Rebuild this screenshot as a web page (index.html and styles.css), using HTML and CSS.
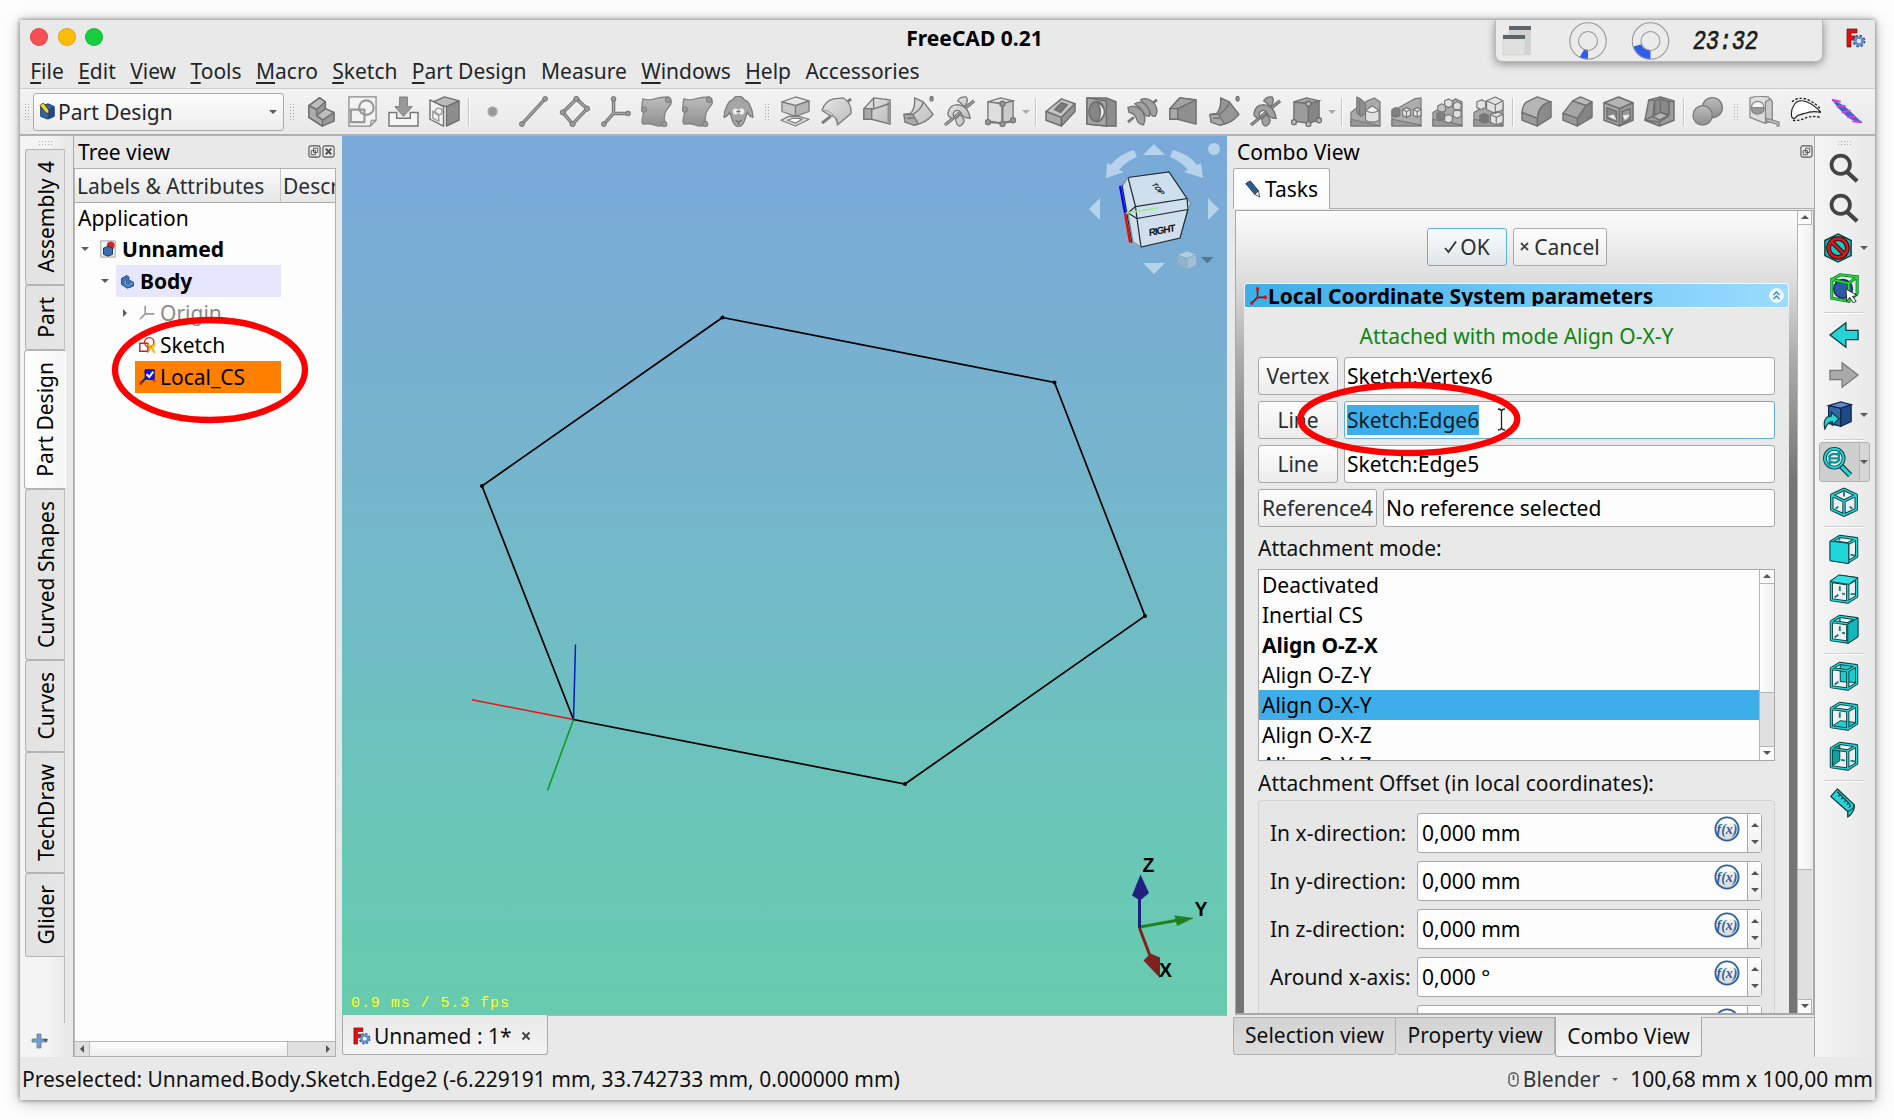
FILE: index.html
```html
<!DOCTYPE html>
<html lang="en">
<head>
<meta charset="utf-8">
<title>FreeCAD 0.21</title>
<link rel="stylesheet" href="styles.css">
</head>
<body>
<svg class="defs" width="0" height="0">
  <defs>
    <linearGradient id="g" x1="0" y1="0" x2="0" y2="1"><stop offset="0" stop-color="#bdbdbd"/><stop offset="1" stop-color="#8f8f8f"/></linearGradient>
    <linearGradient id="lg" x1="0" y1="0" x2="1" y2="1"><stop offset="0" stop-color="#e6e6e6"/><stop offset="1" stop-color="#bbb"/></linearGradient>
    <linearGradient id="fx" x1="0" y1="0" x2="0" y2="1"><stop offset="0" stop-color="#fff"/><stop offset="1" stop-color="#d5d8cf"/></linearGradient>
  </defs>
  <!-- Part Design toolbar -->
  <symbol id="i-body" viewBox="0 0 32 32"><g stroke="#6f6f6f" stroke-width="1.5" stroke-linejoin="round"><path fill="#999" d="M3 10 14 2l6 4v7l9 5v8L17 31 3 22z"/><path fill="#bdbdbd" d="M3 10 14 2l6 4-9 8zM11 20l9-7 9 4-12 8z"/><path fill="#ababab" d="M3 10l8 4v6l6 5v6L3 22z"/></g></symbol>
  <symbol id="i-sketch" viewBox="0 0 32 32"><path fill="#f3f3f3" stroke="#8a8a8a" stroke-width="1.3" d="M2 1h28v24l-6 6H2z"/><path fill="#ccc" stroke="#8a8a8a" d="M30 25l-6 6 1-6z"/><g fill="none" stroke="#999" stroke-width="2.2"><path d="M4 14h14v13H4z"/><circle cx="20" cy="12" r="7.5"/></g></symbol>
  <symbol id="i-map" viewBox="0 0 32 32"><path fill="#f5f5f5" stroke="#777" stroke-width="1.5" d="M1 17h8v6h14v-6h8v14H1z"/><path fill="#999" stroke="#7a7a7a" d="M12 1h8v10h5l-9 10-9-10h5z"/></symbol>
  <symbol id="i-valid" viewBox="0 0 32 32"><g stroke="#6d6d6d" stroke-width="1.4" stroke-linejoin="round"><path fill="#bbb" d="M2 7 16 1l15 4-13 6z"/><path fill="#8d8d8d" d="M18 11 31 5v20l-13 6z"/><path fill="#f2f2f2" d="M1 4l14 7v20L1 24z"/></g><path fill="none" stroke="#999" stroke-width="1.5" d="M4 16l6 3v7l-6-3z"/><circle cx="10" cy="16" r="3.5" fill="none" stroke="#999" stroke-width="1.5"/></symbol>
  <symbol id="i-point" viewBox="0 0 32 32"><circle cx="16" cy="16" r="4.6" fill="#999" stroke="#aaa" stroke-width="1.5"/></symbol>
  <symbol id="i-line" viewBox="0 0 32 32"><path d="M4 29 28 3" stroke="#777" stroke-width="3.6"/><path d="M4 29 28 3" stroke="#aaa" stroke-width="1.4"/><g fill="#999" stroke="#777"><circle cx="4" cy="29" r="2.5"/><circle cx="28" cy="3" r="2.5"/></g></symbol>
  <symbol id="i-plane" viewBox="0 0 32 32"><path d="M18 3 29 13 14 29 4 17z" fill="none" stroke="#777" stroke-width="3.6"/><path d="M18 3 29 13 14 29 4 17z" fill="none" stroke="#aaa" stroke-width="1.4"/><g fill="#999" stroke="#777"><circle cx="18" cy="3" r="2.7"/><circle cx="29" cy="13" r="2.7"/><circle cx="14" cy="29" r="2.7"/><circle cx="4" cy="17" r="2.7"/></g></symbol>
  <symbol id="i-lcs" viewBox="0 0 32 32"><path d="M14 3v15h15M14 18 4 29" fill="none" stroke="#777" stroke-width="3.6"/><path d="M14 3v15h15M14 18 4 29" fill="none" stroke="#aaa" stroke-width="1.3"/><g fill="#999" stroke="#777"><circle cx="14" cy="3" r="2.5"/><circle cx="29" cy="18" r="2.5"/><circle cx="4" cy="29" r="2.5"/></g></symbol>
  <symbol id="i-binder" viewBox="0 0 32 32"><path fill="url(#g)" stroke="#858585" stroke-width="1.4" d="M2 3q6 2 12 0t14-2q4 2 3 7-3 4-5 7t-2 8q1 4-1 7-4 2-9 0t-12-1q-2-3 0-8 1-5-1-9 0-5 1-9z"/><g fill="#999" stroke="#777"><circle cx="28" cy="4" r="2.8"/><circle cx="3" cy="14" r="2.8"/><circle cx="24" cy="29" r="2.8"/></g></symbol>
  <symbol id="i-clone" viewBox="0 0 32 32"><path fill="#a5a5a5" stroke="#7b7b7b" stroke-width="1.3" d="M10 4q2-4 6-4t6 4q4 1 6 6 3 6 3 12-4-1-6-5l-3 9q-2 5-6 6-4-1-6-6l-3-9q-2 4-6 5 0-6 3-12 2-5 6-6z"/><circle cx="13" cy="16" r="3" fill="#eee"/><circle cx="19" cy="16" r="3" fill="#eee"/><path fill="none" stroke="#666" stroke-width="1.3" d="M14 16h4M13 25l3 2 3-2M16 27v3"/></symbol>
  <symbol id="i-pad" viewBox="0 0 32 32"><g stroke="#7b7b7b" stroke-width="1.3" stroke-linejoin="round"><path fill="#ddd" d="M1 25l8-4h10l11 3-14 7z"/><path fill="#fff" d="M8 25l5-2h6l4 1-7 4z"/><path fill="#e5e5e5" d="M2 6l14-5 14 4-14 5z"/><path fill="#c9c9c9" d="M2 6l14 4v11L2 16z"/><path fill="#b5b5b5" d="M16 10l14-5v11l-14 5z"/></g></symbol>
  <symbol id="i-rev" viewBox="0 0 32 32"><path d="M1 28l9-7M25 8l6-5" stroke="#7b7b7b" stroke-width="3"/><path fill="url(#lg)" stroke="#7b7b7b" stroke-width="1.3" stroke-linejoin="round" d="M1 15Q4 5 13 3L23 2Q32 7 31 18L17 30Q18 21 9 20Z"/><path fill="none" stroke="#999" d="M1 15q12-2 16 15"/></symbol>
  <symbol id="i-loft" viewBox="0 0 32 32"><g stroke="#777" stroke-width="1.4" stroke-linejoin="round"><path fill="url(#lg)" d="M2 13 12 2l17 2v25L10 24H2z"/><path fill="none" d="M12 2v11M10 14 28 8"/><path fill="none" stroke-width="1" d="M27 6v21"/><path fill="#aaa" d="M2 13h8v11H2z"/></g></symbol>
  <symbol id="i-pipe" viewBox="0 0 32 32"><g stroke="#777" stroke-width="1.4" stroke-linejoin="round"><path fill="url(#lg)" d="M12 2l9 4 10 13q-7 9-19 11l-9-4-2-7 7-1q5-6 4-16z"/><path fill="#aaa" d="M1 19h9l6 10-5 1-9-3z"/><path fill="none" d="M21 6q-2 8-11 13M4 23h7"/><ellipse cx="29.500" cy="2.800" rx="1.500" ry="2.300" fill="#999"/></g></symbol>
  <symbol id="i-helix" viewBox="0 0 32 32"><path d="M1 30 31 5" stroke="#777" stroke-width="3.4"/><path d="M1 30 31 5" stroke="#bbb" stroke-width="1"/><g fill="url(#lg)" stroke="#777" stroke-width="1.3"><path d="M14 5q3-5 9-4 3 5-2 10l-4-4zM12 24q1 7 4 7 4-1 5-6l-4-6z"/><path d="M4 19Q5 9 14 9q11 1 13 14-8 0-9-5-3-5-7-2-3 2 0 7-6 0-7-4z"/></g></symbol>
  <symbol id="i-prim" viewBox="0 0 32 32"><g stroke="#777" stroke-width="1.4"><path fill="#e2e2e2" d="M3 6 16 2l13 3-10 3z"/><path fill="#dedede" d="M3 6l15 2v20L3 26z"/><path fill="#cbcbcb" d="M18 8l11-3v20l-11 3z"/><path fill="none" stroke-width="2" d="M18 8v20L3 27M18 28l11-2"/><g fill="#999"><circle cx="18" cy="8" r="2.600"/><circle cx="3" cy="27" r="2.600"/><circle cx="18" cy="29" r="2.600"/><circle cx="29" cy="25" r="2.600"/></g></g></symbol>
  <symbol id="i-pocket" viewBox="0 0 32 32"><g stroke="#6f6f6f" stroke-width="1.5" stroke-linejoin="round"><path fill="#c4c4c4" d="M1 16 17 3l14 5-14 14z"/><path fill="#aaa" d="M1 16l16 6v9L1 25z"/><path fill="#949494" d="M17 22 31 8v8L17 31z"/><path fill="#7b7b7b" d="M10 14l7-7 6 2-7 8z"/></g></symbol>
  <symbol id="i-hole" viewBox="0 0 32 32"><g stroke="#6b6b6b" stroke-width="1.4"><path fill="#8d8d8d" d="M1 2h20l10 4v25h-9L1 29z"/><path fill="#a5a5a5" d="M1 2l20 3v26L1 29z"/><ellipse cx="11" cy="16" rx="8" ry="10.500" fill="#858585"/><path fill="#eee" d="M12 7q7 3 7 10-1 7-7 9 3-4 3-9t-3-10z"/></g></symbol>
  <symbol id="i-groove" viewBox="0 0 32 32"><path d="M1 27l6-5M24 9l7-5" stroke="#777" stroke-width="2.800"/><g fill="#a0a0a0" stroke="#6f6f6f" stroke-width="1.300" stroke-linejoin="round"><path d="M14 4q8-4 15 5 4 7 0 12-5 0-6-6-3-6-9-11z"/><path d="M8 8q7-4 12 2 5 6 3 11-4 0-6-4-4-6-9-9z"/><path d="M1 12q7-4 13 2 7 7 3 16-6-1-7-6-2-6-8-7z"/></g></symbol>
  <symbol id="i-sloft" viewBox="0 0 32 32"><g stroke="#6f6f6f" stroke-width="1.400" stroke-linejoin="round"><path fill="#8f8f8f" d="M2 13 12 2l17 2v25L10 24H2z"/><path fill="#a2a2a2" d="M2 13 12 2l17 2-19 9z"/><path fill="#aaa" d="M2 13h8v11H2z"/></g></symbol>
  <symbol id="i-spipe" viewBox="0 0 32 32"><g stroke="#6f6f6f" stroke-width="1.400" stroke-linejoin="round"><path fill="#969696" d="M12 2l9 4 10 13q-7 9-19 11l-9-4-2-7 7-1q5-6 4-16z"/><path fill="#a8a8a8" d="M1 19h9l6 10-5 1-9-3z"/><path fill="none" d="M21 6q-2 8-11 13M4 23h7"/><ellipse cx="29.500" cy="2.800" rx="1.500" ry="2.300" fill="#999"/></g></symbol>
  <symbol id="i-shelix" viewBox="0 0 32 32"><path d="M1 30 31 5" stroke="#6f6f6f" stroke-width="3.400"/><path d="M1 30 31 5" stroke="#aaa" stroke-width="1"/><g fill="#a0a0a0" stroke="#6f6f6f" stroke-width="1.300"><path d="M14 5q3-5 9-4 3 5-2 10l-4-4zM12 24q1 7 4 7 4-1 5-6l-4-6z"/><path d="M4 19Q5 9 14 9q11 1 13 14-8 0-9-5-3-5-7-2-3 2 0 7-6 0-7-4z"/></g></symbol>
  <symbol id="i-sprim" viewBox="0 0 32 32"><g stroke="#6f6f6f" stroke-width="1.400"><path fill="#aaa" d="M3 6 16 2l13 3-10 3z"/><path fill="#9c9c9c" d="M3 6l15 2v20L3 26z"/><path fill="#858585" d="M18 8l11-3v20l-11 3z"/><g fill="#bbb"><circle cx="18" cy="8" r="2.600"/><circle cx="3" cy="27" r="2.600"/><circle cx="18" cy="29" r="2.600"/><circle cx="29" cy="25" r="2.600"/></g></g></symbol>
  <symbol id="i-mirror" viewBox="0 0 32 32"><g stroke="#777" stroke-width="1.200" stroke-linejoin="round"><path fill="#aaa" d="M1 31V17L7 12 18 5l7-3 6 4v25z"/><path fill="#999" d="M1 24l30 7H1z"/><path fill="#8f8f8f" d="M7 1v16l4 4 5-3V9q-3-6-9-8z"/><path fill="none" d="M10 4v16"/><path fill="#e2e2e2" d="M16 15h14v10q-7 4-14 0z"/><path fill="#f2f2f2" d="M16 15l7-5 7 5q-7 4-14 0z"/></g></symbol>
  <symbol id="i-linear" viewBox="0 0 32 32"><g stroke="#777" stroke-width="1.200" stroke-linejoin="round"><path fill="#adadad" d="M1 31V16L24 3l7-1v29z"/><path fill="#9a9a9a" d="M1 24l30 6v1H1z"/><path fill="#808080" d="M1 14l4-2 4 2v6l-4 2-4-2z"/><path fill="#e6e6e6" d="M12 14l4-2 4 2v6l-4 2-4-2zM23 14l4-2 4 2v6l-4 2-4-2z"/><path fill="none" d="M12 14l4 2 4-2M16 16v6M23 14l4 2 4-2M27 16v6"/></g></symbol>
  <symbol id="i-polar" viewBox="0 0 32 32"><g stroke="#777" stroke-width="1.200" stroke-linejoin="round"><path fill="#a8a8a8" d="M1 31V17L24 3l7 3v25z"/><path fill="#9a9a9a" d="M1 24l30 6v1H1z"/><path fill="#e0e0e0" d="M13 5l4-2 4 2v5l-4 2-4-2zM22 8l4-2 4 2v5l-4 2-4-2zM22 16l4-2 4 2v5l-4 2-4-2zM13 21l4-2 4 2v5l-4 2-4-2z"/><path fill="#c4c4c4" d="M6 10l4-2 4 2v5l-4 2-4-2z"/><path fill="#808080" d="M5 18l4-2 4 2v5l-4 2-4-2z"/></g></symbol>
  <symbol id="i-multi" viewBox="0 0 32 32"><g stroke="#777" stroke-width="1.200" stroke-linejoin="round"><path fill="#a8a8a8" d="M1 31V17L24 3l7 5v23z"/><path fill="#9a9a9a" d="M1 24l30 6v1H1z"/><path fill="#e2e2e2" d="M4 6l5-2 4 2v6l-5 2-4-2zM14 5l9-4 8 4v9l-8 4-9-4zM18 19l7-3 6 3v8l-7 3-6-3z"/><path fill="#777" d="M7 20l5-2 4 2v6l-4 2-5-2z"/><path fill="none" d="M14 5l9 4 8-4M23 9v9M18 19l6 3 7-3M24 22v8"/></g></symbol>
  <symbol id="i-fillet" viewBox="0 0 32 32"><g stroke="#6f6f6f" stroke-width="1.400" stroke-linejoin="round"><path fill="#b5b5b5" d="M1 17Q2 7 8 5L17 1l14 5q-13 2-14 17z"/><path fill="#9a9a9a" d="M1 17l16 6v8L1 25z"/><path fill="#8b8b8b" d="M17 31v-8Q18 9 31 6v16z"/></g></symbol>
  <symbol id="i-chamfer" viewBox="0 0 32 32"><g stroke="#6f6f6f" stroke-width="1.400" stroke-linejoin="round"><path fill="#bbb" d="M11 5l8-4 12 5-6 4z"/><path fill="#a5a5a5" d="M1 18 11 5l14 5-9 13z"/><path fill="#999" d="M1 18l15 5v8L1 25z"/><path fill="#858585" d="M16 31v-8l9-13 6-4v16z"/></g></symbol>
  <symbol id="i-draft" viewBox="0 0 32 32"><g stroke="#6f6f6f" stroke-width="1.500" stroke-linejoin="round"><path fill="#b5b5b5" d="M1 7 16 1l15 6-14 6z"/><path fill="#aaa" d="M1 7l16 6v18L1 25z"/><path fill="#999" d="M17 13l14-6v18l-14 6z"/><path fill="#888" d="M4 12l10 4v11L4 23z"/><path fill="#999" d="M20 16l8-3v11l-8 4z"/><path fill="#eee" stroke="none" d="M5 21l9 4-3-6zM20 20l8-1-5 6z"/></g></symbol>
  <symbol id="i-thick" viewBox="0 0 32 32"><g stroke="#6f6f6f" stroke-width="1.500" stroke-linejoin="round"><path fill="#9c9c9c" d="M1 25 5 4l12-3 14 4v20l-15 6z"/><path fill="#8a8a8a" d="M11 5l6-2 9 3v13l-9-2-6 3z"/><path fill="#b5b5b5" d="M9 21l8-4 8 3-9 5z"/><path fill="none" d="M17 3v14M5 4l6 1-2 16-8 4 15 2 10-7V6l5-1M16 27v4"/></g></symbol>
  <symbol id="i-bool" viewBox="0 0 32 32"><g fill="url(#g)" stroke="#7b7b7b" stroke-width="1.400"><circle cx="21" cy="12" r="10.300"/><circle cx="11" cy="20" r="10"/></g></symbol>
  <symbol id="i-tape" viewBox="0 0 32 32"><g stroke="#888" stroke-width="1.300" stroke-linejoin="round"><path fill="#dedede" d="M1 2l8-2 11 1 4 5v20l-8 2-15-6z"/><path fill="#c9c9c9" d="M17 6l5-3 2 3v20l-7 2z"/><circle cx="9" cy="12" r="6.500" fill="#f4f4f4"/><path fill="#999" d="M2.500 12h13q0 6-6.500 6.500t-6.500-6.500z"/><path fill="#ccc" d="M18 23l13 4v4h-2v-2l-11-3z"/></g></symbol>
  <symbol id="i-airfoil" viewBox="0 0 32 32"><path fill="#fff" stroke="#222" stroke-width="1.200" d="M2 22Q0 15 5 8q4-5 12-2 8 3 15 11-9-2-17 1-8 2-9 4-2 2-4 0z"/><g fill="none" stroke="#222" stroke-width="1.400" stroke-dasharray="2.500 1.800"><path d="M2 6q7-6 17-2 8 4 12 9M3 25q6 1 12-2 7-3 17-1"/></g></symbol>
  <symbol id="i-glider" viewBox="0 0 32 32"><path fill="#3f66c4" d="M1 4q10 3 17 10t14 13q-9 0-16-6Q7 13 1 4z"/><path stroke="#d63be8" stroke-width="2.200" d="M1 4l9 2M6 11l9-1M11 17l9-2M17 22l8-1M22 26l10 1"/></symbol>
  <!-- Application glyphs -->
  <symbol id="i-fc" viewBox="0 0 20 20"><path fill="#d11" stroke="#611" stroke-width=".7" d="M1 1h10v4H5v3h4v4H5v7H1z"/><circle cx="13" cy="13" r="4.400" fill="none" stroke="#35588f" stroke-width="4" stroke-dasharray="2 1.450"/><circle cx="13" cy="13" r="3.700" fill="none" stroke="#5f8fd0" stroke-width="2.600"/></symbol>
  <symbol id="i-wb" viewBox="0 0 20 20"><path fill="#3465a4" stroke="#15305a" d="M3 5l8-3 7 3v11l-7 3-8-3z"/><path fill="#204a87" d="M11 8l7-3v11l-7 3z"/><path fill="#f4d328" stroke="#222" stroke-width=".8" d="M2 4l4-3 6 8v4l-3-1z"/></symbol>
  <symbol id="i-doc" viewBox="0 0 20 20"><path fill="#f4f4f4" stroke="#999" d="M2 1h16v18H2z"/><circle cx="13" cy="6" r="4.300" fill="#d22"/><path fill="#3b6db0" stroke="#143054" d="M5 9l5-2 5 2v7l-5 2-5-2z"/></symbol>
  <symbol id="i-bodyb" viewBox="0 0 20 20"><path fill="#3c72b4" stroke="#16355f" d="M2 6l7-4 3 2v4l6 3v5l-8 3-8-5z"/><path fill="none" stroke="#9fc4ee" d="M7 9v4l4 3 6-4"/></symbol>
  <symbol id="i-origin" viewBox="0 0 20 20"><path fill="none" stroke="#999" stroke-width="1.800" d="M8 2v9h10M8 11l-6 6"/></symbol>
  <symbol id="i-sk" viewBox="0 0 20 20"><path fill="none" stroke="#c22" stroke-width="1.600" d="M2 8h9v9H2z"/><circle cx="12.500" cy="7" r="5.200" fill="none" stroke="#c22" stroke-width="1.500"/><path fill="#fc0" stroke="#c80" stroke-width=".6" d="M10 9q5 0 4 5-1 4-4 5l3-5zM19 9q-5 0-4 5 1 4 4 5l-2-5z"/></symbol>
  <symbol id="i-lc" viewBox="0 0 20 20"><path stroke="#333" stroke-width="2.600" d="M2 18l8-8"/><g fill="#d22"><circle cx="3" cy="17" r="1.800"/><circle cx="8" cy="4" r="1.600"/><circle cx="18" cy="14" r="1.600"/></g><path fill="#0b16e8" stroke="#000080" d="M8 2h10v10l-2 1-8-1z"/><path fill="none" stroke="#fff" stroke-width="2.200" d="M9.500 7l3 3 4.500-6"/></symbol>
  <symbol id="i-lcsr" viewBox="0 0 20 20"><path fill="none" stroke="#333" stroke-width="1.800" d="M9 3v9h8M9 12l-6 6"/><g fill="#d11"><circle cx="9" cy="3" r="1.900"/><circle cx="17" cy="12" r="1.900"/><circle cx="3" cy="18" r="1.900"/><circle cx="9" cy="12" r="1.600"/></g></symbol>
  <symbol id="i-pencil" viewBox="0 0 20 20"><path fill="#2d5c94" stroke="#122c4e" d="M2 4l5-3 9 11-4 4z"/><path fill="#f0f0f0" stroke="#222" stroke-width=".8" d="M16 12l1.500 7-5.500-3z"/></symbol>
  <symbol id="i-float" viewBox="0 0 14 14"><rect x="1" y="1" width="12" height="12" rx="2" fill="none" stroke="#555" stroke-width="1.200"/><path fill="none" stroke="#555" d="M6 3.500h4.500V8H6zM3.500 6H8v4.500H3.500z"/></symbol>
  <symbol id="i-close" viewBox="0 0 14 14"><rect x="1" y="1" width="12" height="12" rx="2" fill="none" stroke="#555" stroke-width="1.200"/><path stroke="#444" stroke-width="2" d="M4 4l6 6M10 4l-6 6"/></symbol>
  <!-- View toolbar -->
  <symbol id="i-zoom" viewBox="0 0 32 32"><circle cx="12.500" cy="12.500" r="9.800" fill="none" stroke="#444" stroke-width="4"/><path d="M19 20l11 10" stroke="#444" stroke-width="4.500"/></symbol>
  <symbol id="i-nodraw" viewBox="0 0 32 32"><path fill="#17c6c8" stroke="#0b3a3c" stroke-width="1.500" d="M16 1l14 7v16l-14 7L2 24V8z"/><circle cx="16" cy="16" r="10" fill="none" stroke="#300" stroke-width="5"/><path d="M9 9l14 14" stroke="#300" stroke-width="5"/><circle cx="16" cy="16" r="10" fill="none" stroke="#d31919" stroke-width="3"/><path d="M9 9l14 14" stroke="#d31919" stroke-width="3"/></symbol>
  <symbol id="i-boxsel" viewBox="0 0 32 32"><circle cx="15" cy="17" r="10" fill="#2c5aa5" stroke="#132c55" stroke-width="1.500"/><g fill="none"><path stroke="#063" stroke-width="3.200" d="M3 7l18 4v19L3 27zM3 7l9-5 18 2-9 7M30 4v18l-9 8"/><path stroke="#2be52b" stroke-width="1.600" d="M3 7l18 4v19L3 27zM3 7l9-5 18 2-9 7M30 4v18l-9 8"/></g><path fill="#fff" stroke="#222" d="M18 17l12 7-5 1 4 5-3 2-4-6-3 4z"/></symbol>
  <symbol id="i-back" viewBox="0 0 32 32"><path fill="#25d4d6" stroke="#0b3a3c" stroke-width="1.400" d="M1 16 18 3v8h13v10H18v8z"/></symbol>
  <symbol id="i-fwd" viewBox="0 0 32 32"><path fill="#aaa" stroke="#777" stroke-width="1.400" d="M31 16 14 3v8H1v10h13v8z"/></symbol>
  <symbol id="i-link" viewBox="0 0 32 32"><g stroke="#12284a" stroke-width="1.400"><path fill="#5d8fcc" d="M6 6l13-4 11 3-11 4z"/><path fill="#3465a4" d="M6 6l13 3v19L6 25z"/><path fill="#204a87" d="M19 9l11-4v18l-11 5z"/></g><path fill="#25d4d6" stroke="#0b3a3c" stroke-width="1.300" d="M2 31q-3-13 7-14v-4l8 7-7 7v-4q-5 0-8 8z"/></symbol>
  <symbol id="i-fit" viewBox="0 0 32 32"><path d="M18 19l11 11" stroke="#0b3a3c" stroke-width="6"/><path d="M18 19l11 11" stroke="#25d4d6" stroke-width="3.500"/><circle cx="12" cy="12" r="10" fill="#e8f6f6" stroke="#0b3a3c" stroke-width="4"/><circle cx="12" cy="12" r="10" fill="none" stroke="#25d4d6" stroke-width="2.200"/><path fill="none" stroke="#0d9497" stroke-width="2.400" d="M6 11q3-5 9-3l2-2v6h-5M18 13q-3 5-9 3l-2 2v-6h5"/></symbol>
  <symbol id="i-iso" viewBox="0 0 32 32"><g fill="none" stroke-linejoin="round"><path stroke="#0b3a3c" stroke-width="3.600" d="M16 2.500l13 6V24l-13 6-13-6V8.500zM3 8.500l13 6.500 13-6.500M16 15v15"/><path stroke="#25d4d6" stroke-width="1.600" d="M16 2.500l13 6V24l-13 6-13-6V8.500zM3 8.500l13 6.500 13-6.500M16 15v15"/><path stroke="#0d7f82" stroke-width="2" d="M16 5v5M7 23l3-2M22 21l3 2"/></g></symbol>
  <symbol id="i-wire" viewBox="0 0 32 32"><g fill="none" stroke-linejoin="round"><path stroke="#0b3a3c" stroke-width="3.400" d="M2.500 8 20 10.500V30L2.500 27.500zM2.500 8l9-5.500L29.500 5l-9.500 5.500M29.500 5v19L20 30"/><path stroke="#25d4d6" stroke-width="1.500" d="M2.500 8 20 10.500V30L2.500 27.500zM2.500 8l9-5.500L29.500 5l-9.500 5.500M29.500 5v19L20 30"/></g></symbol>
  <symbol id="i-front" viewBox="0 0 32 32"><use href="#i-wire"/><path fill="#1ed6d8" stroke="#0b3a3c" d="M1 7.500l20 2.500v21.500L1 28.500z"/><path d="M11 3v4M23 22l5 1" stroke="#0d7f82" stroke-width="2"/></symbol>
  <symbol id="i-top" viewBox="0 0 32 32"><use href="#i-wire"/><path fill="#35e0e2" stroke="#0b3a3c" d="M1 8l9.500-7L31 4l-10 7z"/><path d="M11.500 13v5M6 25l4-3M14 21l3 .5M23 21.500h5" stroke="#0d7f82" stroke-width="2"/></symbol>
  <symbol id="i-right" viewBox="0 0 32 32"><use href="#i-wire"/><path fill="#12b9bc" stroke="#0b3a3c" d="M20 10.500 31 4v20l-11 7.500z"/><path d="M11.500 13v5M6 25l4-3M14 20l3 .5M11.500 4v4" stroke="#0d7f82" stroke-width="2"/></symbol>
  <symbol id="i-rear" viewBox="0 0 32 32"><path fill="#1bcfd1" stroke="#0b3a3c" d="M12 3l17 2v18l-17-1z"/><use href="#i-wire"/><path d="M6 25l4-3" stroke="#0d7f82" stroke-width="2"/></symbol>
  <symbol id="i-bottom" viewBox="0 0 32 32"><path fill="#1bcfd1" stroke="#0b3a3c" d="M3 27l9-6 17 2-9 7z"/><use href="#i-wire"/><path d="M11.500 12v6" stroke="#0d7f82" stroke-width="2"/></symbol>
  <symbol id="i-left" viewBox="0 0 32 32"><path fill="#0fa1a4" stroke="#0b3a3c" d="M3 8l8.500-5v18L3 27z"/><use href="#i-wire"/><path d="M13 20l4 1M23 21l5 1" stroke="#0d7f82" stroke-width="2"/></symbol>
  <symbol id="i-ruler" viewBox="0 0 32 32"><path fill="#25d4d6" stroke="#0b3a3c" stroke-width="1.300" stroke-linejoin="round" d="M2 9l7-8 18 17q1 7-7 13v-6z"/><path stroke="#0b3a3c" stroke-width="1.200" d="M20 25q6-2 7-7M9 4l3 3-2 2M12 7l3 3-2 2M15 10l3 3-2 2M18 13l3 3-2 2M21 16l2 3-2 2" fill="none"/></symbol>
  <symbol id="i-fx" viewBox="0 0 26 26"><circle cx="13" cy="13" r="11.600" fill="url(#fx)" stroke="#2f5f9e" stroke-width="1.800"/><text x="13" y="17.500" text-anchor="middle" class="fx-text">f(x)</text></symbol>
</svg>

<div class="window">
  <header class="titlebar">
    <div class="lights"><i class="red"></i><i class="yellow"></i><i class="green"></i></div>
    <h1>FreeCAD 0.21</h1>
    <svg class="fc-icon" width="20" height="20"><use href="#i-fc"/></svg>
  </header>
  <div class="applet">
    <svg width="327" height="41" viewBox="1495 20 327 41">
      <path fill="#d2d2d2" d="M1508 26h22v29h-22z"/><path fill="#5c666a" d="M1508 26h22v4h-22z"/>
      <path fill="#e0e0de" stroke="#c4c4c4" stroke-width=".5" d="M1502 35h22v20h-22z"/><path fill="#5c666a" d="M1502 35h22v4h-22z"/>
      <path fill="#2f5df2" d="M1587 59.300v-9.300l-3.500-1-5 8.300q4 2 8.500 2z"/>
      <path fill="#2f5df2" d="M1649.500 59.300v-9q-8-1-9-6l-8.500 2.500q4 12 17.500 12.500z"/>
      <g fill="none" stroke="#999" stroke-width="1.100"><circle cx="1587" cy="41" r="18.200"/><circle cx="1587" cy="41" r="9.500"/><circle cx="1649.500" cy="41" r="18.200"/><circle cx="1649.500" cy="41" r="9.500"/></g>
      <text x="1692" y="48.500" class="clock" textLength="65" lengthAdjust="spacingAndGlyphs">23:32</text>
    </svg>
  </div>
  <nav class="menubar"><span><u>F</u>ile</span><span><u>E</u>dit</span><span><u>V</u>iew</span><span><u>T</u>ools</span><span><u>M</u>acro</span><span><u>S</u>ketch</span><span><u>P</u>art Design</span><span>Measure</span><span><u>W</u>indows</span><span><u>H</u>elp</span><span>Accessories</span></nav>
  <div class="toolbar">
    <b class="grip g0"></b>
    <div class="combo"><svg width="18" height="18"><use href="#i-wb"/></svg><span>Part Design</span><i class="caret"></i></div>
    <b class="grip g1"></b>
    <svg><use href="#i-body"/></svg><svg><use href="#i-sketch"/></svg><svg><use href="#i-map"/></svg><svg><use href="#i-valid"/></svg>
    <b class="sep"></b>
    <svg><use href="#i-point"/></svg><svg><use href="#i-line"/></svg><svg><use href="#i-plane"/></svg><svg><use href="#i-lcs"/></svg><svg><use href="#i-binder"/></svg><svg><use href="#i-binder"/></svg><svg><use href="#i-clone"/></svg>
    <b class="grip"></b>
    <svg><use href="#i-pad"/></svg><svg><use href="#i-rev"/></svg><svg><use href="#i-loft"/></svg><svg><use href="#i-pipe"/></svg><svg><use href="#i-helix"/></svg><svg><use href="#i-prim"/></svg><i class="caret faint"></i>
    <b class="sep"></b>
    <svg><use href="#i-pocket"/></svg><svg><use href="#i-hole"/></svg><svg><use href="#i-groove"/></svg><svg><use href="#i-sloft"/></svg><svg><use href="#i-spipe"/></svg><svg><use href="#i-shelix"/></svg><svg><use href="#i-sprim"/></svg><i class="caret faint"></i>
    <b class="sep"></b>
    <svg><use href="#i-mirror"/></svg><svg><use href="#i-linear"/></svg><svg><use href="#i-polar"/></svg><svg><use href="#i-multi"/></svg>
    <b class="sep"></b>
    <svg><use href="#i-fillet"/></svg><svg><use href="#i-chamfer"/></svg><svg><use href="#i-draft"/></svg><svg><use href="#i-thick"/></svg>
    <b class="sep"></b>
    <svg><use href="#i-bool"/></svg>
    <b class="grip"></b>
    <svg><use href="#i-tape"/></svg><svg><use href="#i-airfoil"/></svg><svg><use href="#i-glider"/></svg>
  </div>

  <main class="main">
    <aside class="benches">
      <b class="hgrip"></b>
      <div class="bench b1"><span>Assembly 4</span></div>
      <div class="bench b2"><span>Part</span></div>
      <div class="bench b3 active"><span>Part Design</span></div>
      <div class="bench b4"><span>Curved Shapes</span></div>
      <div class="bench b5"><span>Curves</span></div>
      <div class="bench b6"><span>TechDraw</span></div>
      <div class="bench b7"><span>Glider</span></div>
      <div class="bench-rest"></div>
      <svg class="plus" width="18" height="16" viewBox="0 0 18 16"><path fill="#729fcf" stroke="#6a7f97" stroke-width=".8" d="M6 1h4v5h6v3h-6v6H6V9H1V6h5z"/><path fill="#555" d="M12 6h5l-2.500 3z"/></svg>
    </aside>

    <section class="tree">
      <div class="dock-title"><span>Tree view</span><svg width="13" height="13"><use href="#i-float"/></svg><svg width="13" height="13"><use href="#i-close"/></svg></div>
      <div class="tree-box">
        <div class="tree-head"><span>Labels &amp; Attributes</span><span>Descr</span></div>
        <div class="row r0">Application</div>
        <div class="row r1"><i class="caret"></i><svg width="18" height="18"><use href="#i-doc"/></svg><strong>Unnamed</strong></div>
        <div class="row r2"><i class="caret"></i><p class="cell body-cell"><svg width="15" height="17"><use href="#i-bodyb"/></svg><strong>Body</strong></p></div>
        <div class="row r3"><i class="caret side"></i><p class="cell muted"><svg width="18" height="18"><use href="#i-origin"/></svg>Origin</p></div>
        <div class="row r4"><p class="cell"><svg width="18" height="18"><use href="#i-sk"/></svg>Sketch</p></div>
        <div class="row r5"><p class="cell picked"><svg width="18" height="18"><use href="#i-lc"/></svg>Local_CS</p></div>
        <div class="hscroll"><i class="tri left"></i><b></b><i class="tri right"></i></div>
      </div>
    </section>

    <section class="view">
      <svg class="scene" width="885" height="879" viewBox="342 136 885 879">
        <path d="M722.500 317.500 1054.500 382.500 1145 616 905 784 573.500 719.500 482 486z" fill="none" stroke="#000" stroke-width="1.700"/>
        <g fill="#000"><circle cx="722.500" cy="317.500" r="2"/><circle cx="1054.500" cy="382.500" r="2"/><circle cx="1145" cy="616" r="2"/><circle cx="905" cy="784" r="2"/><circle cx="482" cy="486" r="2"/></g>
        <path d="M472 699.800 573.500 719.500" stroke="#f01010" stroke-width="1.500"/>
        <path d="M547.500 790.500 573.500 719.500" stroke="#0a9a1c" stroke-width="1.500"/>
        <path d="M575.500 644.500 573.500 719.500" stroke="#1010d8" stroke-width="1.500"/>
        <!-- navigation cube -->
        <g fill="#dcebf5" fill-opacity=".62">
          <path d="M1154 144l11 11h-22zM1154 274l11-11h-22zM1089 209l11-11v22zM1219 209l-11-11v22z"/>
          <circle cx="1214" cy="149" r="6"/>
          <path d="M1134 150l3 7q-12 5-18 13l5 2-18 6 1-15 4 2q8-11 23-15zM1173 150l-3 7q12 5 18 13l-4 2 19 6-2-15-4 2q-8-11-24-15z"/>
        </g>
        <path fill="#cfdfee" d="M1128 177.500 1169 172 1188 201 1191 204 1187 209 1180 238 1141 247 1133 243 1123 186z"/>
        <g fill="none" stroke="#222a30" stroke-width="1.200"><path d="M1128 177.500 1169 172 1187 198.500 1135.500 206.500zM1137 218.500 1188 209.500 1180 238 1141 247zM1135.500 206.500 1137 218.500 1128 213zM1187 198.500 1188 209.500M1122 185l10 58"/><path stroke="#7a9097" d="M1188 199l3 4-3 6M1123 185l5-8M1128 213l5 29 8 5"/></g>
        <path d="M1120 186l5 27" stroke="#0000f5" stroke-width="2.200"/><path d="M1125 213.500l5 29" stroke="#fa0000" stroke-width="2.200"/><path d="M1126 213 1158 208" stroke="#97ec97" stroke-width="1.600"/>
        <text class="cube-text" transform="translate(1149,236) rotate(-10) skewX(-8)" textLength="27">RIGHT</text>
        <text class="cube-text small" transform="translate(1151,184) rotate(50) skewX(-25)">TOP</text>
        <g stroke="#85a9bb" stroke-width=".8"><path fill="#b2d0e3" d="M1177 255l10-4 9.500 3.500-9 4z"/><path fill="#8fb3c9" d="M1177 255l10 3.500v11l-10-4z"/><path fill="#9fc1d6" d="M1187 258.500l9.500-4v11l-9.500 4z"/></g>
        <path fill="#56788b" d="M1201 257h12.500l-6.200 6.500z"/>
        <!-- axis cross -->
        <g stroke-width="3"><path d="M1140 927 1176 920.500" stroke="#208020"/><path d="M1139.500 928V895" stroke="#202080"/><path d="M1139.500 928l11 29" stroke="#802020"/></g>
        <path fill="#208020" d="M1174.500 915.500 1194 918 1177 926z"/><path fill="#202080" d="M1140.500 874.500 1149 893 1140 900.500 1132 895.500z"/><path fill="#802020" d="M1150.500 953.500 1160 957.500V978L1143.500 960.500z"/>
        <g class="axis-text"><text x="1142.500" y="871.500">Z</text><text x="1194.500" y="915.500">Y</text><text x="1159" y="976.500">X</text></g>
        <text class="fps" x="351" y="1007" textLength="158">0.9 ms / 5.3 fps</text>
      </svg>
      <div class="mdi"><div class="mdi-tab"><svg width="18" height="18"><use href="#i-fc"/></svg><span>Unnamed : 1*</span><svg width="10" height="10" viewBox="0 0 10 10"><path d="M1.500 1.500l7 7M8.500 1.500l-7 7" stroke="#444" stroke-width="2"/></svg></div></div>
    </section>

    <section class="combo-dock">
      <div class="dock-title"><span>Combo View</span><svg width="13" height="13"><use href="#i-float"/></svg></div>
      <div class="tabs"><div class="tab"><svg width="18" height="18"><use href="#i-pencil"/></svg><span>Tasks</span></div></div>
      <div class="pane">
        <div class="task-area">
          <div class="dialog-buttons"><button class="ok"><svg width="13" height="14" viewBox="0 0 13 14"><path fill="none" stroke="#333" stroke-width="1.800" d="M1 8l3.500 4L12 1.500"/></svg>OK</button><button class="cancel"><svg width="9" height="9" viewBox="0 0 9 9"><path d="M1 1l7 7M8 1l-7 7" stroke="#444" stroke-width="1.800"/></svg>Cancel</button></div>
          <div class="group-head"><svg width="19" height="19"><use href="#i-lcsr"/></svg><strong>Local Coordinate System parameters</strong><svg class="fold" width="15" height="15" viewBox="0 0 15 15"><circle cx="7.500" cy="7.500" r="6.800" fill="#eef3f6" stroke="#fff"/><path fill="none" stroke="#2b93d4" stroke-width="1.400" d="M4.500 7l3-3 3 3M4.500 11l3-3 3 3"/></svg></div>
          <div class="group">
            <p class="status">Attached with mode Align O-X-Y</p>
            <div class="ref"><button>Vertex</button><div class="field">Sketch:Vertex6</div></div>
            <div class="ref"><button>Line</button><div class="field focus"><mark>Sketch:Edge6</mark></div></div>
            <div class="ref"><button>Line</button><div class="field">Sketch:Edge5</div></div>
            <div class="ref"><button class="wide">Reference4</button><div class="field">No reference selected</div></div>
            <p class="label mode-label">Attachment mode:</p>
            <div class="list">
              <ul><li>Deactivated</li><li>Inertial CS</li><li class="bold">Align O-Z-X</li><li>Align O-Z-Y</li><li class="sel">Align O-X-Y</li><li>Align O-X-Z</li><li>Align O-Y-Z</li></ul>
              <div class="vscroll"><i class="tri up"></i><b></b><s></s><i class="tri down"></i></div>
            </div>
            <p class="label offset-label">Attachment Offset (in local coordinates):</p>
            <div class="offset">
              <div class="spin-row"><span>In x-direction:</span><div class="spin">0,000 mm<svg><use href="#i-fx"/></svg><em><i class="tri up"></i><i class="tri down"></i></em></div></div>
              <div class="spin-row"><span>In y-direction:</span><div class="spin">0,000 mm<svg><use href="#i-fx"/></svg><em><i class="tri up"></i><i class="tri down"></i></em></div></div>
              <div class="spin-row"><span>In z-direction:</span><div class="spin">0,000 mm<svg><use href="#i-fx"/></svg><em><i class="tri up"></i><i class="tri down"></i></em></div></div>
              <div class="spin-row"><span>Around x-axis:</span><div class="spin">0,000 °<svg><use href="#i-fx"/></svg><em><i class="tri up"></i><i class="tri down"></i></em></div></div>
              <div class="spin-row"><span></span><div class="spin"><svg><use href="#i-fx"/></svg><em></em></div></div>
            </div>
          </div>
        </div>
        <div class="vscroll main-scroll"><i class="tri up"></i><b></b><s></s><i class="tri down"></i></div>
      </div>
      <div class="bottom-tabs"><div class="t1">Selection view</div><div class="t2">Property view</div><div class="t3">Combo View</div><div class="rest"></div></div>
    </section>

    <aside class="viewbar">
      <b class="hgrip"></b>
      <div class="vb"><svg><use href="#i-zoom"/></svg></div>
      <div class="vb"><svg><use href="#i-zoom"/></svg></div>
      <div class="vb drop"><svg><use href="#i-nodraw"/></svg><i class="caret"></i></div>
      <div class="vb"><svg><use href="#i-boxsel"/></svg></div>
      <hr>
      <div class="vb"><svg><use href="#i-back"/></svg></div>
      <div class="vb"><svg><use href="#i-fwd"/></svg></div>
      <div class="vb drop"><svg><use href="#i-link"/></svg><i class="caret"></i></div>
      <hr>
      <div class="vb drop pressed"><svg><use href="#i-fit"/></svg><i class="caret"></i></div>
      <div class="vb"><svg><use href="#i-iso"/></svg></div>
      <hr>
      <div class="vb"><svg><use href="#i-front"/></svg></div>
      <div class="vb"><svg><use href="#i-top"/></svg></div>
      <div class="vb"><svg><use href="#i-right"/></svg></div>
      <hr>
      <div class="vb"><svg><use href="#i-rear"/></svg></div>
      <div class="vb"><svg><use href="#i-bottom"/></svg></div>
      <div class="vb"><svg><use href="#i-left"/></svg></div>
      <hr>
      <div class="vb"><svg><use href="#i-ruler"/></svg></div>
    </aside>
  </main>

  <footer class="statusbar">
    <span>Preselected: Unnamed.Body.Sketch.Edge2 (-6.229191 mm, 33.742733 mm, 0.000000 mm)</span>
    <div class="nav-style"><svg width="11" height="15" viewBox="0 0 11 15"><rect x="1" y="1" width="9" height="13" rx="4" fill="none" stroke="#555" stroke-width="1.400"/><path d="M5.500 3v5" stroke="#555" stroke-width="1.600"/></svg>Blender<i class="caret small"></i></div>
    <span class="dims">100,68 mm x 100,00 mm</span>
  </footer>
</div>

<svg class="marks" width="1894" height="1120">
  <g fill="none" stroke="#fe0000" stroke-width="6.300"><ellipse cx="210" cy="370" rx="95" ry="50"/><ellipse cx="1408.800" cy="419" rx="108.500" ry="34"/></g>
  <path d="M1498 409q3 0 3.500 2 .5-2 3.500-2M1501.500 411v17M1498 430q3 0 3.500-2 .5 2 3.500 2" fill="none" stroke="#fff" stroke-width="3"/>
  <path d="M1498 409q3 0 3.500 2 .5-2 3.500-2M1501.500 411v17M1498 430q3 0 3.500-2 .5 2 3.500 2" fill="none" stroke="#222" stroke-width="1.300"/>
</svg>
</body>
</html>
```
FILE: styles.css
```css
* { box-sizing: border-box; }
html, body { margin: 0; height: 1120px; overflow: hidden; }
body { background: #fdfdfd; font-family: "Noto Sans", sans-serif; font-size: 21px; line-height: 28px; color: #101010; padding: 20px 19px 20px 20px; white-space: nowrap; }
p, ul, h1 { margin: 0; padding: 0; }
li { list-style: none; }
button { font: inherit; color: #2a2e32; padding: 0; }
.defs { position: absolute; }
.window { width: 1855px; height: 1080px; background: #e9e9e9; display: flex; flex-direction: column; position: relative; box-shadow: 0 0 5px rgba(0,0,0,.5), 0 2px 16px rgba(0,0,0,.22); }

/* Title bar and menus */
.titlebar { height: 33px; display: flex; align-items: center; padding-left: 10px; }
.lights { display: flex; gap: 9.5px; }
.lights i { width: 18px; height: 18px; border-radius: 50%; box-shadow: inset 0 0 0 1px rgba(0,0,0,.12); }
.red { background: #f84f57; }
.yellow { background: #fcbc09; }
.green { background: #17cf3e; }
.titlebar h1 { flex: 1; text-align: center; font-size: 21px; line-height: 28px; padding-top: 3px; color: #000; }
.fc-icon { margin-right: 9px; margin-top: 3px; }
.applet { position: absolute; left: 1475px; top: 0; width: 328px; height: 42px; background: #ebebeb; border-radius: 0 0 7px 7px; border: 1px solid #b9b9b9; border-top: 0; box-shadow: 0 2px 8px rgba(0,0,0,.4); clip-path: inset(0 -20px -20px -20px); }
.applet svg { display: block; }
.clock { font: italic 28px "Liberation Mono", monospace; fill: #1c1c1c; stroke: #1c1c1c; stroke-width: .7px; }

.menubar { height: 35px; display: flex; align-items: center; padding: 0 0 0 3px; color: #232629; }
.menubar span { padding: 0 7.200px; }
.menubar u { text-decoration-thickness: 2px; text-underline-offset: 3px; text-decoration-skip-ink: none; }

/* Main toolbar */
.toolbar { height: 48px; border-top: 1px solid #cdcdcd; border-bottom: 2px solid #b0b0b0; background: linear-gradient(#f3f3f3, #e9e9e9); display: flex; align-items: center; }
.toolbar > svg { width: 31px; height: 31px; margin: 0 5px; flex: none; }
.grip { width: 16px; height: 17px; flex: none; background: radial-gradient(#aaa 28%, transparent 40%) 0 0 / 3px 3px content-box; background-clip: content-box; padding: 0 5px; }
.grip.g0 { width: 13px; padding: 0 4px; }
.grip.g1 { width: 17px; }
.combo { width: 251px; height: 38px; border: 1px solid #aaa; border-radius: 3px; background: linear-gradient(#fdfdfd, #ededed); display: flex; align-items: center; padding: 0 6px 0 4px; }
.combo span { flex: 1; padding-left: 2px; color: #232629; }
.combo svg { margin-top: -2px; }
.sep { width: 7.3px; height: 28px; flex: none; background: linear-gradient(90deg, transparent 3px, #c4c4c4 3px 4px, #fff 4px 5px, transparent 5px); }
.caret { width: 0; height: 0; border: 4px solid transparent; border-top-color: #5c5c5c; border-bottom: 0; flex: none; }
.caret.faint { border-top-color: #aaa; margin: 0 2px 0 1px; }
.caret.side { border: 4px solid transparent; border-left: 4px solid #5c5c5c; border-right: 0; }

/* Workbench tabs */
.main { height: 921px; display: flex; }
.benches { width: 46px; display: flex; flex-direction: column; align-items: flex-end; background: linear-gradient(90deg, #f4f4f4 60%, #e9e9e9); }
.hgrip { width: 16px; height: 6px; background: radial-gradient(#aaa 28%, transparent 40%) 0 0 / 3px 3px; }
.benches .hgrip { margin: 4px 12px 3px 0; }
.bench { width: 40px; border: 1px solid #b4b4b4; border-right-color: #c0c0c0; border-radius: 3px 0 0 3px; background: linear-gradient(90deg, #e2e2e2, #e6e6e6); display: flex; align-items: center; justify-content: center; color: #000; margin-right: 1px; padding-left: 1px; }
.bench span { writing-mode: vertical-rl; transform: rotate(180deg); }
.bench.active { width: 42px; background: linear-gradient(90deg, #fff, #f6f6f6); border-right-color: transparent; margin-right: 0; padding: 0 1px 0 0; }
.b1 { height: 136px; } .b2 { height: 65px; } .b3 { height: 139px; } .b4 { height: 171px; } .b5 { height: 92px; } .b6 { height: 121px; } .b7 { height: 84px; }
.bench-rest { width: 1px; height: 66px; background: #bbb; margin-right: 1px; }
.plus { margin: 10px 17px 0 0; }

/* Tree dock */
.tree { width: 263px; margin-left: 7px; border-left: 1px solid #aaa; display: flex; flex-direction: column; color: #000; }
.dock-title { height: 32px; display: flex; align-items: center; padding: 0 1px 0 4px; color: #000; }
.dock-title span { flex: 1; }
.dock-title svg { margin-left: 1px; margin-top: -1px; }
.tree-box { flex: 1; border: 1px solid #b0b0b0; border-left-color: #bbb; background: #fdfdfd; display: flex; flex-direction: column; overflow: hidden; }
.tree-head { height: 34px; flex: none; display: flex; border-bottom: 1px solid #aaa; background: linear-gradient(#fbfbfb, #e6e6e6); line-height: 35px; color: #2a2e32; }
.tree-head span { width: 206px; padding-left: 2px; border-right: 1px solid #c4c4c4; flex: none; }
.tree-head span + span { border: 0; }
.row { height: 32px; display: flex; align-items: center; flex: none; }
.r0 { padding-left: 3px; height: 30px; }
.r1 { padding-left: 6px; }
.r1 svg { margin: 0 5px 0 10px; }
.r2 { padding-left: 26px; }
.r2 .cell { margin-left: 7px; width: 165px; padding-left: 4px; gap: 5px; background: #e6e6ff; }
.r3 { padding-left: 48px; }
.cell { height: 32px; display: flex; align-items: center; gap: 4px; }
.r3 .cell { margin-left: 11px; }
.r4, .r5 { padding-left: 60px; }
.r4 .cell, .r5 .cell { padding-left: 3px; }
.muted { color: #8b8b8b; }
.picked { background: #ff8000; width: 146px; }
.hscroll { margin-top: auto; height: 15px; border-top: 1px solid #b5b5b5; background: #e0e0e0; display: flex; align-items: center; }
.hscroll .tri { margin: 0 5px; }
.hscroll b { width: 199px; height: 14px; background: linear-gradient(#fdfdfd, #eee); border: 1px solid #bbb; border-width: 0 1px; margin-right: auto; }
.tri { width: 0; height: 0; border: 4px solid transparent; flex: none; }
.tri.left { border-right-color: #555; border-left: 0; }
.tri.right { border-left-color: #555; border-right: 0; }
.tri.up { border-bottom-color: #555; border-top: 0; }
.tri.down { border-top-color: #555; border-bottom: 0; }

/* 3D view */
.view { width: 885px; margin-left: 6px; display: flex; flex-direction: column; }
.scene { display: block; background: linear-gradient(#7aa9da, #79afd1 22%, #72bac8 52%, #6ac7b6 80%, #67cbaf); }
.axis-text { font: bold 19.5px "Liberation Sans", sans-serif; }
.cube-text { font: bold 10px "Liberation Sans", sans-serif; fill: #111; }
.cube-text.small { font-size: 7px; }
.fps { font: 15px "Liberation Mono", monospace; fill: #ffff14; }
.mdi { height: 42px; border-top: 1px solid #b5b5b5; }
.mdi-tab { width: 206px; height: 40px; margin-top: -1px; background: linear-gradient(#e9e9e9, #f4f4f4); border: 1px solid #aaa; border-top: 0; border-radius: 0 0 3px 3px; display: flex; align-items: center; padding: 2px 0 0 10px; }
.mdi-tab span { padding: 0 9px 0 3px; }

/* Combo dock */
.combo-dock { width: 581px; margin-left: 6px; display: flex; flex-direction: column; }
.tabs { height: 41px; border-bottom: 1px solid #b0b0b0; }
.tab { width: 97px; height: 41px; border: 1px solid #aaa; border-bottom: 0; border-radius: 3px 3px 0 0; background: linear-gradient(#fff, #fbfbfb); display: flex; align-items: center; padding-left: 10px; gap: 3px; color: #000; }
.pane { height: 805px; border: 1px solid #a8a8a8; margin: 1px 0 0 2px; border-bottom-width: 2px; display: flex; padding-right: 1px; }
.task-area { flex: 1; height: 802px; overflow: hidden; background: linear-gradient(#fcfcfc 0, #ddd 70px, #aaa 150px, #757575 270px); padding: 17px 8px 0; display: flex; flex-direction: column; }
.dialog-buttons { display: flex; gap: 6px; justify-content: center; padding-left: 1px; }
button { height: 38px; border: 1px solid #a9a9a9; border-radius: 3px; background: linear-gradient(#fdfdfd, #ececec); display: flex; align-items: center; justify-content: center; flex: none; }
.ok { width: 80px; border-color: #57b0e6; gap: 3px; background: linear-gradient(#fafcfd, #dfe6ea); }
.cancel { width: 94px; gap: 5px; }
.group-head { height: 25px; margin-top: 17px; background: linear-gradient(90deg, #3daee9, #9bdcff); border: 1px solid #f4f8fa; border-radius: 3px 3px 0 0; display: flex; align-items: center; padding: 0 3px 0 4px; overflow: hidden; flex: none; color: #000; }
.group-head strong { flex: 1; height: 21px; line-height: 23px; overflow: hidden; }
.group-head .fold { margin-right: 1px; }
.group { flex: none; height: 740px; background: #e9e9e9; padding: 0 14px; }
.status { text-align: center; color: #0c860c; height: 49px; line-height: 57px; }
.ref { display: flex; gap: 6px; height: 38px; margin-bottom: 6px; }
.ref button { width: 80px; }
.ref button.wide { width: 119px; }
.field { flex: 1; border: 1px solid #aaa; border-radius: 3px; background: #fdfdfd; line-height: 30px; padding: 1px 0 0 2px; color: #000; display: flex; align-items: center; }
.field.focus { border-color: #57b0e6; padding-top: 0; }
mark { background: #3daee9; color: #0b1a24; line-height: 30px; height: 30px; }
.mode-label { height: 36px; line-height: 30px; }
.list { height: 192px; border: 1px solid #a8a8a8; background: #fdfdfd; display: flex; }
.list ul { flex: 1; height: 190px; overflow: hidden; }
.list li { height: 30px; line-height: 31px; padding-left: 3px; color: #000; }
.list .bold { font-weight: bold; }
.list .sel { background: #3daee9; }
.vscroll { width: 15px; flex: none; border-left: 1px solid #b5b5b5; background: #fbfbfb; display: flex; flex-direction: column; align-items: center; }
.vscroll .tri { margin: 4px 0 5px; }
.vscroll b { width: 14px; height: 110px; border: 1px solid #b5b5b5; border-width: 1px 0; background: linear-gradient(90deg, #fdfdfd, #f0f0f0); }
.vscroll s { flex: 1; width: 14px; background: #e0e0e0; border-bottom: 1px solid #b5b5b5; }
.main-scroll b { height: 646px; }
.main-scroll { border-right: 1px solid #b5b5b5; }
.offset-label { height: 39px; line-height: 44px; }
.offset { border: 1px solid #d2d2d2; border-radius: 3px; background: #e6e6e6; height: 300px; padding: 12px 12px 0 11px; }
.spin-row { display: flex; height: 40px; margin-bottom: 8px; align-items: center; }
.spin-row span { width: 147px; }
.spin { flex: 1; height: 40px; border: 1px solid #a8a8a8; border-radius: 3px; background: #fdfdfd; display: flex; align-items: center; padding-left: 4px; color: #000; }
.spin svg { width: 26px; height: 26px; margin: -7px 7px 0 auto; }
.spin em { width: 14px; height: 38px; border-left: 1px solid #a8a8a8; display: flex; flex-direction: column; align-items: center; justify-content: space-between; padding: 9px 0 8px; background: linear-gradient(#fdfdfd, #eee); }
.fx-text { font: italic bold 14px "Liberation Serif", serif; fill: #2f62a6; }
.bottom-tabs { display: flex; margin-top: 2px; height: 41px; }
.bottom-tabs div { text-align: center; border: 1px solid #b0b0b0; border-radius: 0 0 3px 3px; height: 38px; line-height: 35px; background: linear-gradient(#d3d3d3, #dcdcdc); }
.bottom-tabs .t1 { width: 163px; }
.bottom-tabs .t2 { width: 159px; border-left: 0; }
.bottom-tabs .t3 { width: 147px; height: 40px; line-height: 39px; background: linear-gradient(#e9e9e9, #f4f4f4); border-top: 0; border-color: #a8a8a8; }
.bottom-tabs .rest { flex: 1; border: 0; border-top: 1px solid #b0b0b0; background: none; border-radius: 0; }

/* View toolbar */
.viewbar { flex: 1; border-left: 1px solid #aaa; background: linear-gradient(90deg, #f4f4f4, #e9e9e9); display: flex; flex-direction: column; }
.viewbar .hgrip { margin: 4px 0 2px 22px; }
.vb { height: 40px; display: flex; align-items: center; padding-left: 14px; gap: 6px; flex: none; }
.vb svg { width: 30px; height: 30px; flex: none; }
.vb.drop { padding-left: 8px; gap: 7px; }
.pressed { background: linear-gradient(90deg, #cfcfcf 39px, #b5b5b5 39px 40px, #d6d6d6 40px); border: 1px solid #b0b0b0; border-radius: 3px; margin: 0 5px 0 4px; width: 51px; }
.vb.pressed { padding-left: 3px; }
hr { width: 40px; height: 2px; border: 0; background: #cfcfcf; border-bottom: 1px solid #fff; margin: 4px 0 1px 9px; flex: none; }

/* Status bar */
.statusbar { height: 43px; display: flex; align-items: center; padding: 1px 2px 0; }
.nav-style { margin-left: auto; display: flex; align-items: center; color: #33373a; gap: 4px; }
.nav-style .caret { border-width: 3px 3px 0; margin: 0 12px 0 8px; }
.marks { position: absolute; left: 0; top: 0; pointer-events: none; }
```
